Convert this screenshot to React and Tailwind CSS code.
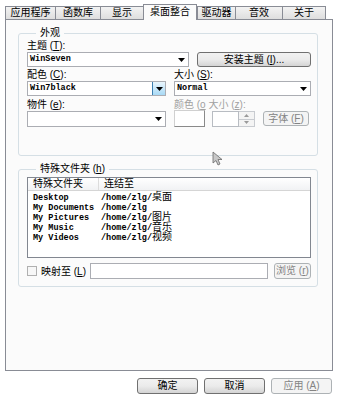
import React from 'react';

const tabs = [
    { label: '应用程序', w: 'w-[50px]' },
    { label: '函数库', w: 'w-[45px]' },
    { label: '显示', w: 'w-[43px]' },
    { label: '桌面整合', w: 'w-[54px]', active: true },
    { label: '驱动器', w: 'w-[38px]' },
    { label: '音效', w: 'w-[47px]' },
    { label: '关于', w: 'w-[44px]', last: true },
];

const folders = [
    ['Desktop', '/home/zlg/', '桌面'],
    ['My Documents', '/home/zlg', ''],
    ['My Pictures', '/home/zlg/', '图片'],
    ['My Music', '/home/zlg/', '音乐'],
    ['My Videos', '/home/zlg/', '视频'],
];

const Arrow = () => (
    <svg width="7" height="4" viewBox="0 0 7 4" className="shrink-0">
        <path d="M0 0 H7 L3.5 4 Z" fill="#000" />
    </svg>
);

const Combo = ({ w, value, blue }) => (
    <div className={`${w} h-[15px] flex items-center border border-[#abadb3] bg-white`}>
        <span className="flex-1 pl-[2px] font-['Liberation_Mono',monospace] font-bold text-[8.5px] leading-none">{value}</span>
        {blue ? (
            <div className="w-[13px] h-full flex items-center justify-center border-l border-[#3c7fb1] bg-linear-to-b from-[#eaf6fd] to-[#a7d9f5]">
                <Arrow />
            </div>
        ) : (
            <div className="w-[13px] h-full flex items-center justify-center"><Arrow /></div>
        )}
    </div>
);

const Btn = ({ children, w, disabled, h = 'h-[15px]' }) => (
    <div className={`${w} ${h} flex items-center justify-center rounded-[3px] border text-[10px] leading-none ${disabled
        ? 'border-[#adb2b5] bg-[#f4f4f4] text-[#838383]'
        : 'border-[#707070] bg-linear-to-b from-[#f2f2f2] via-[#ebebeb] to-[#d4d4d4] text-black'}`}>
        {children}
    </div>
);

const U = ({ c }) => <span className="underline">{c}</span>;

export default function App() {
    return (
        <div className="w-[337px] h-[399px] bg-white font-['Liberation_Sans','Noto_Sans_CJK_SC',sans-serif] text-[10px] text-black relative overflow-hidden">
            {/* Tabs */}
            <div className="h-[19px] flex items-end pl-[5px]">
                {tabs.map(t => (
                    <div
                        key={t.label}
                        className={`${t.w} flex items-center justify-center leading-none border-t border-l border-[#898c95] ${t.last ? 'border-r' : ''} ${t.active
                            ? 'h-[16px] -mb-px relative z-10 border-r bg-[#fbfbfb] pb-[2px]'
                            : 'h-[13px] bg-linear-to-b from-[#f3f3f3] to-[#dedede]'}`}
                    >
                        {t.label}
                    </div>
                ))}
            </div>

            {/* Panel */}
            <div className="ml-[5px] w-[328px] h-[352px] border border-[#898c95] bg-[#fbfbfb] pl-[12px] pt-[7px]">
                {/* 外观 */}
                <fieldset className="w-[300px] h-[129px] border border-[#d5dfe5] rounded-[3px] pl-[8px]">
                    <legend className="ml-[9px] px-[4px] leading-[12px]">外观</legend>
                    <div className="mt-[1px] h-[12px] leading-[12px]">主题 (<U c="T" />):</div>
                    <div className="flex">
                        <Combo w="w-[162px]" value="WinSeven" />
                        <div className="ml-[8px]"><Btn w="w-[114px]">安装主题 (<U c="I" />)...</Btn></div>
                    </div>
                    <div className="flex mt-[2px]">
                        <div className="w-[147px]">
                            <div className="h-[12px] leading-[12px]">配色 (<U c="C" />):</div>
                            <Combo w="w-[139px]" value="Win7black" blue />
                        </div>
                        <div>
                            <div className="h-[12px] leading-[12px]">大小 (<U c="S" />):</div>
                            <Combo w="w-[137px]" value="Normal" />
                        </div>
                    </div>
                    <div className="flex mt-[3px]">
                        <div className="w-[147px]">
                            <div className="h-[12px] leading-[12px]">物件 (<U c="e" />):</div>
                            <div className="w-[139px] h-[16px] flex items-center justify-end border border-[#abadb3] bg-white pr-[3px]">
                                <Arrow />
                            </div>
                        </div>
                        <div>
                            <div className="h-[12px] leading-[12px] text-[#a0a0a0]">颜色 (<U c="o" />&nbsp;大小 (<U c="z" />):</div>
                            <div className="flex items-start">
                                <div className="w-[31px] h-[17px] -mt-px bg-white border border-[#d0d0d0] border-r-[#8a8a8a] border-b-[#8a8a8a]" />
                                <div className="ml-[7px] flex h-[16px]">
                                    <div className="w-[27px] border border-[#b8bcc2] bg-white" />
                                    <div className="w-[16px] flex flex-col">
                                        <div className="flex-1 flex items-center justify-center border border-l-0 border-[#c8cbd0] bg-[#f4f4f4]">
                                            <svg width="5" height="3" viewBox="0 0 5 3"><path d="M2.5 0 L5 3 H0 Z" fill="#9a9a9a" /></svg>
                                        </div>
                                        <div className="flex-1 flex items-center justify-center border border-l-0 border-t-0 border-[#c8cbd0] bg-[#f4f4f4]">
                                            <svg width="5" height="3" viewBox="0 0 5 3"><path d="M0 0 H5 L2.5 3 Z" fill="#9a9a9a" /></svg>
                                        </div>
                                    </div>
                                </div>
                                <div className="ml-[8px]"><Btn w="w-[46px]" disabled>字体 (<U c="F" />)</Btn></div>
                            </div>
                        </div>
                    </div>
                </fieldset>

                {/* 特殊文件夹 */}
                <fieldset className="mt-[7px] w-[300px] h-[124px] border border-[#d5dfe5] rounded-[3px] pl-[8px]">
                    <legend className="ml-[9px] px-[4px] leading-[12px]">特殊文件夹 (<U c="h" />)</legend>
                    <div className="mt-[2px] w-[284px] h-[81px] border border-[#828790] bg-white">
                        <div className="h-[13px] flex border-b border-[#d5d5d5] bg-linear-to-b from-white to-[#f1f2f4] leading-[12px]">
                            <div className="w-[71px] pl-[5px] border-r border-[#dcdcdc]">特殊文件夹</div>
                            <div className="pl-[5px]">连结至</div>
                        </div>
                        <div className="pt-[2px] font-['Liberation_Mono','Noto_Sans_CJK_SC',monospace] font-bold text-[8.5px]">
                            {folders.map(([name, path, cn]) => (
                                <div key={name} className="h-[10px] leading-[10px] flex">
                                    <div className="w-[73px] pl-[5px] whitespace-pre">{name}</div>
                                    <div className="whitespace-pre">{path}<span className="font-normal text-[10px]">{cn}</span></div>
                                </div>
                            ))}
                        </div>
                    </div>
                    <div className="mt-[5px] flex items-center">
                        <div className="w-[10px] h-[10px] border border-[#b0b0b0] bg-[#f7f7f7]" />
                        <div className="ml-[4px] w-[49px]">映射至 (<U c="L" />)</div>
                        <div className="w-[178px] h-[16px] border border-[#abadb3] bg-white" />
                        <div className="ml-[6px]"><Btn w="w-[37px]" h="h-[16px]" disabled>浏览 (<U c="r" />)</Btn></div>
                    </div>
                </fieldset>
            </div>

            {/* Bottom buttons */}
            <div className="mt-[7px] flex justify-end gap-[6px] pr-[5px]">
                <Btn w="w-[61px]" h="h-[16px]">确定</Btn>
                <Btn w="w-[61px]" h="h-[16px]">取消</Btn>
                <Btn w="w-[61px]" h="h-[16px]" disabled>应用 (<U c="A" />)</Btn>
            </div>

            {/* Mouse cursor */}
            <svg className="absolute left-[212px] top-[151px]" width="12" height="15" viewBox="0 0 12 15">
                <path d="M1 1 L1 12 L4 9.5 L6 14 L8 13 L6 8.5 L10 8.5 Z" fill="#c8c8c8" stroke="#6a6a6a" strokeWidth="0.8" strokeLinejoin="round" />
            </svg>
        </div>
    );
}
